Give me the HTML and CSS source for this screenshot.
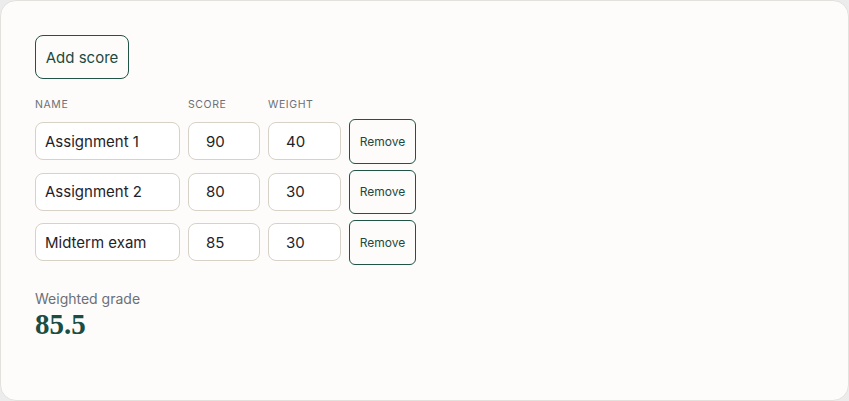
FILE: index.html
```html
<!DOCTYPE html>
<html lang="en">
<head>
<meta charset="utf-8">
<title>Weighted grade</title>
<link rel="stylesheet" href="styles.css">
</head>
<body>
<div class="card">
  <button class="add-btn" type="button">Add score</button>
  <div class="table">
    <div class="label">Name</div>
    <div class="label">Score</div>
    <div class="label">Weight</div>
    <div></div>

    <input class="field" type="text" value="Assignment 1">
    <input class="field num" type="text" value="90">
    <input class="field num" type="text" value="40">
    <button class="remove-btn" type="button">Remove</button>

    <input class="field" type="text" value="Assignment 2">
    <input class="field num" type="text" value="80">
    <input class="field num" type="text" value="30">
    <button class="remove-btn" type="button">Remove</button>

    <input class="field" type="text" value="Midterm exam">
    <input class="field num" type="text" value="85">
    <input class="field num" type="text" value="30">
    <button class="remove-btn" type="button">Remove</button>
  </div>
  <div class="result">
    <div class="result-label">Weighted grade</div>
    <div class="result-value">85.5</div>
  </div>
</div>
</body>
</html>
```

FILE: styles.css
```css
html {
  background: #ececec;
}
body {
  margin: 0;
  font-family: Inter, "Noto Sans", sans-serif;
  color: #1f2328;
}
.card {
  box-sizing: border-box;
  height: 401px;
  background: #fdfcfa;
  border: 1px solid #e3e1dd;
  border-radius: 16px;
  padding: 34px;
}
.add-btn {
  box-sizing: border-box;
  height: 44px;
  width: 94px;
  padding: 0;
  background: transparent;
  border: 1px solid #1f5446;
  border-radius: 8px;
  color: #1d4a40;
  font-family: inherit;
  font-size: 15px;
  display: block;
}
.table {
  margin-top: 18px;
  display: grid;
  grid-template-columns: 145px 72px 73px 67px;
  column-gap: 8px;
  row-gap: 6px;
  align-items: center;
}
.label {
  font-size: 10.5px;
  letter-spacing: 0.6px;
  text-transform: uppercase;
  color: #6b7079;
  line-height: 16px;
}
.field {
  box-sizing: border-box;
  width: 100%;
  height: 38px;
  margin: 0;
  padding: 0 9px;
  background: #ffffff;
  border: 1px solid #d8d1c7;
  border-radius: 8px;
  font-family: inherit;
  font-size: 15px;
  color: #1f2328;
  outline: none;
}
.field.num {
  padding-left: 17px;
}
.remove-btn {
  box-sizing: border-box;
  height: 44.5px;
  width: 100%;
  padding: 0;
  background: transparent;
  border: 1px solid #1f5446;
  border-radius: 6px;
  color: #1d4a40;
  font-family: inherit;
  font-size: 12px;
}
.result {
  margin-top: 25px;
}
.result-label {
  font-size: 14px;
  color: #6b7079;
  line-height: 18px;
}
.result-value {
  font-family: "Liberation Serif", "DejaVu Serif", serif;
  font-weight: bold;
  font-size: 29px;
  color: #1b4d43;
  line-height: 32px;
}
```
